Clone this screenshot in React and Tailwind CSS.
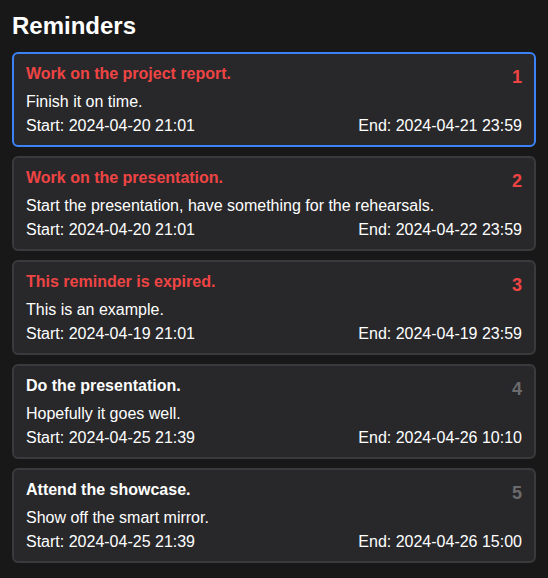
const reminders = [
  { id: 1, title: 'Work on the project report.', text: 'Finish it on time.', start: '2024-04-20 21:01', end: '2024-04-21 23:59', urgent: true, active: true },
  { id: 2, title: 'Work on the presentation.', text: 'Start the presentation, have something for the rehearsals.', start: '2024-04-20 21:01', end: '2024-04-22 23:59', urgent: true },
  { id: 3, title: 'This reminder is expired.', text: 'This is an example.', start: '2024-04-19 21:01', end: '2024-04-19 23:59', urgent: true },
  { id: 4, title: 'Do the presentation.', text: 'Hopefully it goes well.', start: '2024-04-25 21:39', end: '2024-04-26 10:10' },
  { id: 5, title: 'Attend the showcase.', text: 'Show off the smart mirror.', start: '2024-04-25 21:39', end: '2024-04-26 15:00' },
];

const ReminderCard = ({ item }) => (
  <div
    className={`rounded-md border-2 bg-[#28282b] px-3 pt-[11px] pb-[10px] ${item.active ? 'border-[#3b82f6]' : 'border-[#3a3a3d]'}`}
  >
    <div className="flex h-[18px] items-start justify-between">
      <span className={`text-base font-bold leading-[18px] ${item.urgent ? 'text-[#ef4444]' : 'text-white'}`}>
        {item.title}
      </span>
      <span className={`mt-[3px] text-lg font-bold leading-[18px] ${item.urgent ? 'text-[#ef4444]' : 'text-[#6b6b6e]'}`}>
        {item.id}
      </span>
    </div>
    <p className="mt-[10px] text-base leading-[18px] text-white">{item.text}</p>
    <div className="mt-[6px] flex justify-between text-base leading-[18px] text-white">
      <span>Start: {item.start}</span>
      <span>End: {item.end}</span>
    </div>
  </div>
);

export default function App() {
  return (
    <div className="min-h-screen bg-[#181818] px-3 pt-3 pb-4 font-['Liberation_Sans',Arial,sans-serif]">
      <h1 className="text-2xl font-bold leading-7 text-white">Reminders</h1>
      <div className="mt-3 flex flex-col gap-[9px]">
        {reminders.map((r) => (
          <ReminderCard key={r.id} item={r} />
        ))}
      </div>
    </div>
  );
}
